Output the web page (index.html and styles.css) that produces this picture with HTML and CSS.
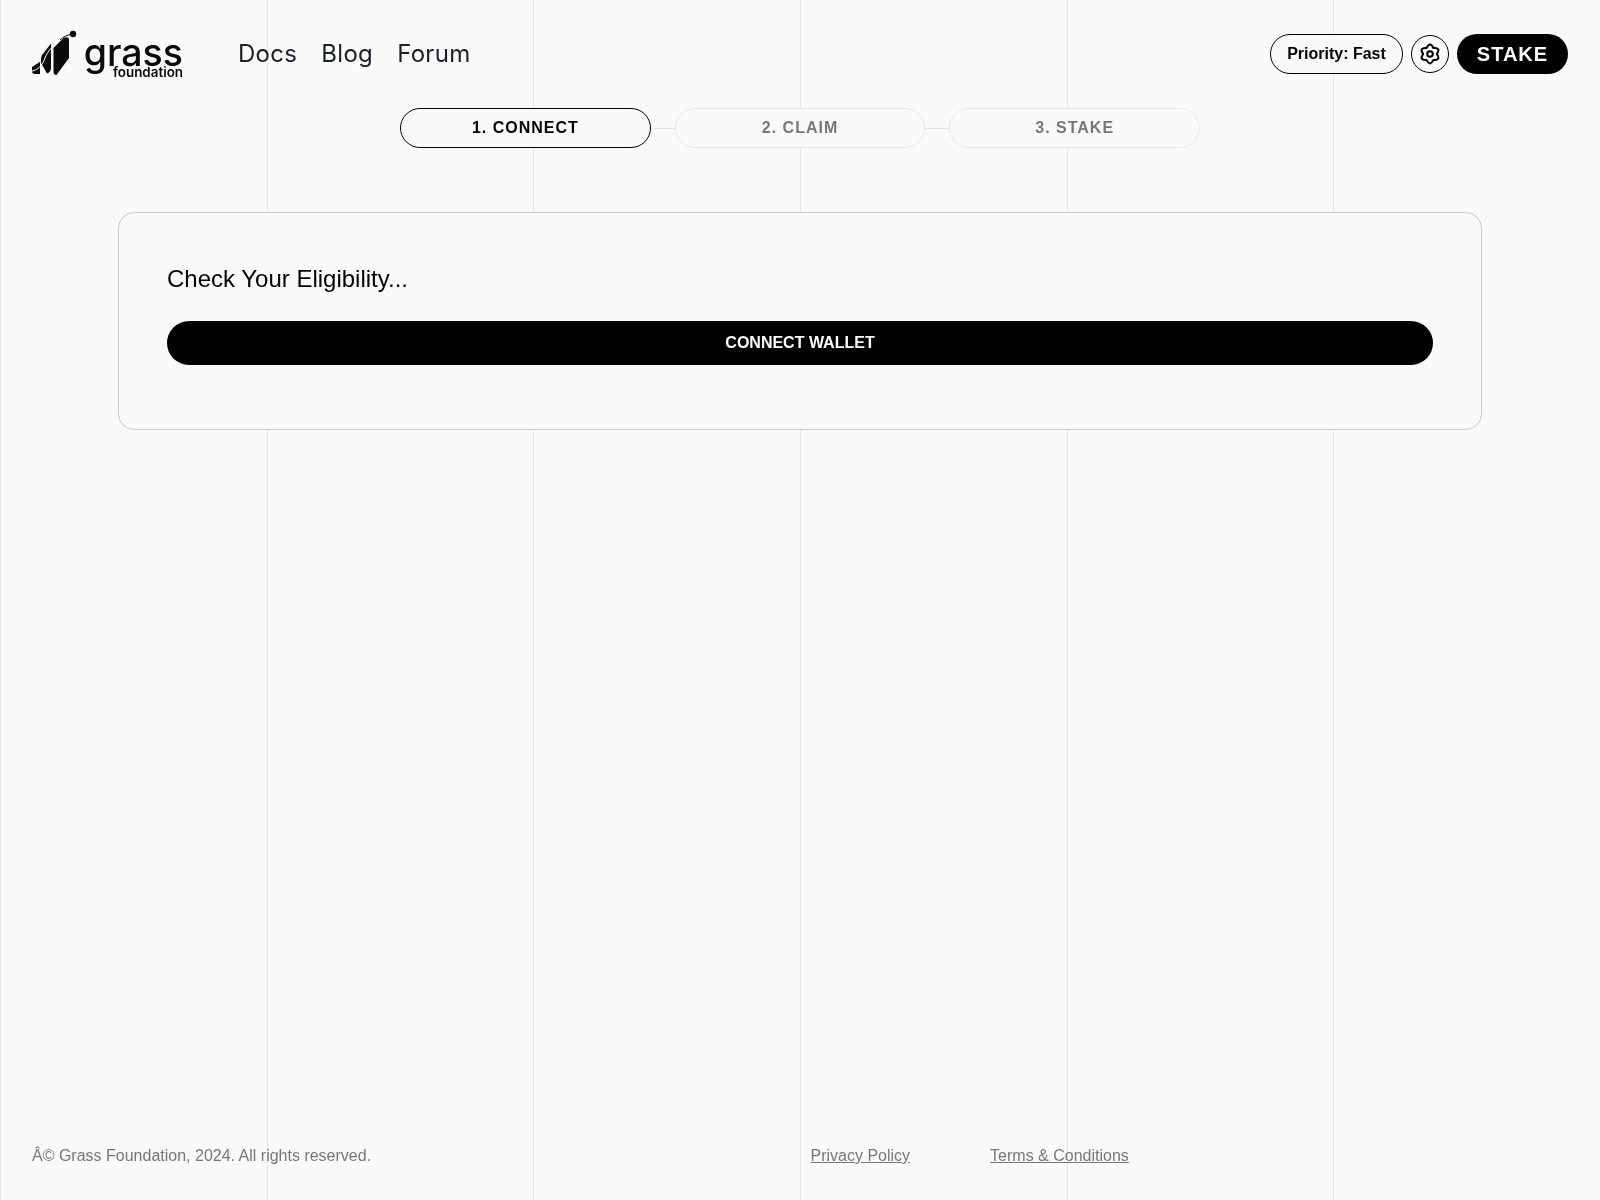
FILE: index.html
```html
<!DOCTYPE html>
<html lang="en">
<head>
    <meta charset="UTF-8">
    <meta name="viewport" content="width=device-width, initial-scale=1.0">
    <title>Grass Foundation - Stake</title>
    <link rel="stylesheet" href="styles.css">
</head>
<body>
    <div class="grid-lines">
        <span></span><span></span><span></span><span></span><span></span><span></span>
    </div>

    <div class="page">
        <header class="header">
            <div class="header-left">
                <a class="logo" href="#">
                    <svg class="logo-mark" viewBox="32 30 46 48" width="46" height="48" aria-hidden="true">
                        <path d="M32 67L40 61.7V74H35C33 74 32 73 32 71Z" fill="#0a0a0a"/>
                        <path d="M51 43.5L42 55C41 57 40.7 60 41 63L47 73.5C49 73 51 71 51 68Z" fill="#0a0a0a"/>
                        <path d="M53.5 48L63 38.5C65 37 69 36 69 40V58L56.5 75C54.5 75 53.5 74 53.5 71Z" fill="#0a0a0a"/>
                        <path d="M32 71C38 70 42 66 45 58C48 50 54 45 60 40" stroke="#fafafa" stroke-width="1" fill="none"/>
                        <path d="M60 40C63 37 67 35 72 34" stroke="#0a0a0a" stroke-width="1" fill="none"/>
                        <circle cx="73" cy="34" r="3.2" fill="#0a0a0a"/>
                    </svg>
                    <span class="logo-text">
                        <span class="logo-grass">grass</span>
                        <span class="logo-sub">foundation</span>
                    </span>
                </a>
                <nav class="nav">
                    <a href="#">Docs</a>
                    <a href="#">Blog</a>
                    <a href="#">Forum</a>
                </nav>
            </div>
            <div class="header-right">
                <button class="priority">Priority: Fast</button>
                <button class="settings" aria-label="Settings">
                    <svg viewBox="0 0 24 24" width="24" height="24" fill="none" stroke="#000" stroke-width="2" stroke-linejoin="round">
                        <path d="M8.6 6.1Q12 -1 15.4 6.1Q23.26 5.5 18.8 12Q23.26 18.5 15.4 17.9Q12 25 8.6 17.9Q.74 18.5 5.2 12Q.74 5.5 8.6 6.1Z"/>
                        <circle cx="12" cy="12" r="2.8"/>
                    </svg>
                </button>
                <button class="stake">STAKE</button>
            </div>
        </header>

        <div class="steps">
            <div class="step active">1. CONNECT</div>
            <div class="step-line"></div>
            <div class="step">2. CLAIM</div>
            <div class="step-line"></div>
            <div class="step">3. STAKE</div>
        </div>

        <main class="card">
            <h2>Check Your Eligibility...</h2>
            <button class="connect">CONNECT WALLET</button>
        </main>

        <footer class="footer">
            <p>Â© Grass Foundation, 2024. All rights reserved.</p>
            <div class="footer-links">
                <a href="#">Privacy Policy</a>
                <a href="#">Terms &amp; Conditions</a>
            </div>
        </footer>
    </div>
</body>
</html>
```

FILE: styles.css
```css
* {
    box-sizing: border-box;
}
body {
    margin: 0;
    background: #fafafa;
    font-family: 'Liberation Sans', Arial, sans-serif;
    color: #000;
}
button {
    font-family: inherit;
    cursor: pointer;
}
a {
    color: inherit;
}
.grid-lines {
    position: fixed;
    inset: 0;
    display: grid;
    grid-template-columns: repeat(6, 1fr);
}
.grid-lines span {
    border-left: 1px solid #e5e5e5;
}
.page {
    position: relative;
    min-height: 1200px;
    display: flex;
    flex-direction: column;
}
.header {
    display: flex;
    justify-content: space-between;
    align-items: center;
    height: 108px;
    padding: 0 32px;
}
.header-left {
    display: flex;
    align-items: center;
    gap: 55px;
}
.logo {
    display: flex;
    align-items: flex-start;
    gap: 11px;
    text-decoration: none;
    color: #0a0a0a;
}
.logo-mark {
    display: block;
}
.logo-text {
    display: flex;
    flex-direction: column;
    align-items: flex-end;
    width: 94px;
    font-family: Inter, sans-serif;
}
.logo-grass {
    font-size: 37.5px;
    font-weight: 500;
    line-height: 32px;
    margin-top: 7px;
}
.logo-sub {
    font-size: 13.4px;
    font-weight: 600;
    line-height: 12px;
    margin-top: -3px;
}
.nav {
    display: flex;
    gap: 24px;
    margin-top: -2px;
}
.nav a {
    font-family: Inter, sans-serif;
    font-size: 24px;
    letter-spacing: 0.3px;
    color: #1a202c;
    text-decoration: none;
}
.header-right {
    display: flex;
    align-items: center;
    gap: 8px;
}
.priority {
    width: 133px;
    height: 40px;
    background: #fafafa;
    border: 1px solid #000;
    border-radius: 20px;
    font-size: 16px;
    font-weight: 700;
    color: #000;
    padding: 0;
}
.settings {
    display: flex;
    align-items: center;
    justify-content: center;
    width: 38px;
    height: 38px;
    padding: 0;
    background: #fafafa;
    border: 1px solid #000;
    border-radius: 50%;
}
.stake {
    width: 111px;
    height: 40px;
    background: #000;
    color: #fff;
    border: none;
    border-radius: 20px;
    font-size: 20px;
    font-weight: 700;
    letter-spacing: 1px;
    padding: 0;
}
.steps {
    display: flex;
    align-items: center;
    width: 800px;
    margin: 0 auto;
}
.step {
    flex: 1;
    height: 40px;
    display: flex;
    align-items: center;
    justify-content: center;
    background: #fafafa;
    border: 1px solid #e8e8e8;
    border-radius: 20px;
    font-size: 16px;
    font-weight: 700;
    letter-spacing: 1px;
    color: #777;
}
.step.active {
    border-color: #000;
    color: #000;
}
.step-line {
    width: 24px;
    height: 1px;
    background: #e5e5e5;
}
.card {
    margin: 64px auto 0;
    width: 1364px;
    height: 218px;
    padding: 48px;
    background: #fafafa;
    border: 1px solid #ccc;
    border-radius: 16px;
}
.card h2 {
    margin: 0 0 24px;
    font-size: 24px;
    font-weight: 400;
    line-height: 36px;
    color: #000;
}
.connect {
    display: block;
    width: 100%;
    height: 44px;
    background: #000;
    color: #fff;
    border: none;
    border-radius: 22px;
    font-size: 16px;
    font-weight: 700;
}
.footer {
    margin-top: auto;
    display: flex;
    align-items: center;
    height: 72px;
    padding: 0 32px 16px;
    font-size: 16px;
    color: #777;
}
.footer p {
    margin: 0;
    width: 778.5px;
}
.footer-links {
    display: flex;
    gap: 80px;
}
```
